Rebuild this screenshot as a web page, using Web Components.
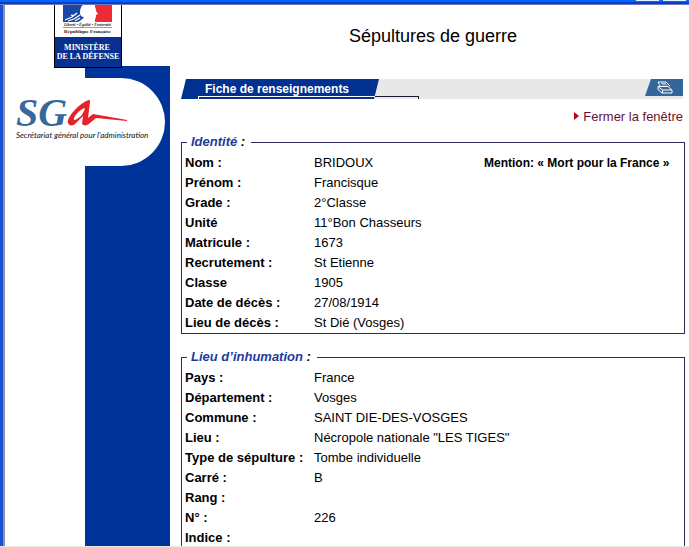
<!DOCTYPE html>
<html lang="fr">
<head>
<meta charset="utf-8">
<title>Sépultures de guerre</title>
<style>
  body {
    margin: 0;
    background: #fff;
    color: #000;
    font: 13px/20px "Liberation Sans", Arial, sans-serif;
  }
</style>
</head>
<body>
<window-frame>
  <side-bar slot="side">
    <ministry-logo></ministry-logo>
    <sga-logo slot="badge"></sga-logo>
  </side-bar>
  <page-title>Sépultures de guerre</page-title>
  <tab-bar>Fiche de renseignements</tab-bar>
  <close-link>Fermer la fenêtre</close-link>
  <record-card id="identite" heading="Identité"></record-card>
  <record-card id="inhumation" heading="Lieu d’inhumation"></record-card>
</window-frame>

<script>
class BaseElement extends HTMLElement {
  constructor() {
    super();
    this.attachShadow({ mode: "open" });
  }

  connectedCallback() {
    this.shadowRoot.innerHTML = this.render();
  }
}

class WindowFrame extends BaseElement {
  render() {
    return `
      <style>
        :host {
          display: grid;
          grid-template-rows: 5px 1fr;
          height: 100vh;
          box-sizing: border-box;
          border-bottom: 1px solid #ece9e0;
          overflow: hidden;
        }
        .top {
          display: flex;
          justify-content: flex-end;
          gap: 4px;
          padding-right: 3px;
          box-sizing: border-box;
          background: linear-gradient(#0566fb 2px, #0040d0 2px 4px, #7478b4 4px);
        }
        .top i {
          width: 23px;
          height: 1px;
          background: #e4f4ff;
        }
        .body {
          display: grid;
          grid-template-columns: 165px 1fr;
          min-height: 0;
          border-left: 3px solid #1c4fd4;
          box-shadow: inset 2px 0 #8c90b0;
          padding-left: 2px;
        }
        main {
          padding: 0 4px 0 11px;
          min-width: 0;
        }
      </style>
      <div class="top"><i></i><i></i></div>
      <div class="body">
        <slot name="side"></slot>
        <main><slot></slot></main>
      </div>
    `;
  }
}

class SideBar extends BaseElement {
  render() {
    return `
      <style>
        :host {
          display: flex;
          flex-direction: column;
        }
        .logo {
          z-index: 1;
          padding-left: 49px;
          height: 61px;
        }
        .band {
          flex: 1;
          padding-top: 12px;
          background: linear-gradient(90deg, #fff 80px, #003399 80px);
        }
      </style>
      <div class="logo"><slot></slot></div>
      <div class="band"><slot name="badge"></slot></div>
    `;
  }
}

class MinistryLogo extends BaseElement {
  render() {
    return `
      <style>
        :host {
          display: block;
          width: 68px;
        }
        svg {
          display: block;
        }
      </style>
      <svg width="68" height="63" viewBox="0 0 68 63" role="img" aria-label="Ministère de la Défense">
        <rect width="68" height="63" fill="#000"/>
        <rect x="1" width="66" height="33" fill="#fff"/>
        <rect x="1" y="32" width="66" height="30" fill="#08308f"/>
        <rect x="9" width="22" height="17" fill="#1a46a4"/>
        <rect x="41" width="17" height="17" fill="#ee2a36"/>
        <path d="M29 0h9c3 1 4 3 4 6l2 3-2 1c0 4-1 5-4 5l1 2H24c3-2 5-3 6-5-3 0-4-2-4-4 0-4 1-7 3-8z" fill="#fff"/>
        <path d="M11 15l7-3 5-4M14 16l6-2 6-4M21 16l5-3M17 10c2 1 4 0 5-1" fill="none" stroke="#fff" stroke-width="1.2"/>
        <text x="33.5" y="21" text-anchor="middle" font-family="Liberation Serif, serif" font-size="4" font-weight="bold" font-style="italic" fill="#222">Liberté • Égalité • Fraternité</text>
        <path d="M9 22.500h49" stroke="#555" stroke-width=".6"/>
        <text x="33.500" y="28" text-anchor="middle" font-family="Liberation Serif, serif" font-size="5" font-weight="bold" fill="#111">République Française</text>
        <g font-family="Liberation Serif, serif" font-size="8" font-weight="bold" fill="#fff" text-anchor="middle">
          <text x="33" y="45">MINISTÈRE</text>
          <text x="34" y="54">DE LA DÉFENSE</text>
        </g>
      </svg>
    `;
  }
}

class SgaLogo extends BaseElement {
  render() {
    return `
      <style>
        :host {
          display: block;
          width: 160px;
          border-radius: 0 44px 44px 0;
          background: #fff;
        }
        svg {
          display: block;
        }
      </style>
      <svg width="160" height="88" viewBox="0 0 160 88" role="img" aria-label="SGA">
        <text x="11" y="48" font-family="Liberation Serif, serif" font-size="40" font-weight="bold" font-style="italic" fill="#38679c">SG</text>
        <!-- brush-stroke "a" with its long tail -->
        <path fill-rule="evenodd" d="M84 22c-7 2-18 12-21 20-1 5 3 7 7 4l8-8-1 8c2 2 5 2 8-1l6-5 31 3v-1l-34-6-5 4 2-16c0-2 0-2-1-2zM80 30c-1 5-5 10-10 12-2 0-1-2 0-4 2-3 6-7 10-8z" fill="#e8202a"/>
        <text x="11" y="60" font-family="Lato, sans-serif" font-size="8" font-style="italic" fill="#111">Secrétariat général pour l'administration</text>
      </svg>
    `;
  }
}

class PageTitle extends BaseElement {
  render() {
    return `
      <style>
        :host {
          display: block;
          padding: 20px 0 32px;
        }
        h1 {
          margin: 0;
          font-size: 18px;
          font-weight: normal;
          line-height: 22px;
          text-align: center;
        }
      </style>
      <h1><slot></slot></h1>
    `;
  }
}

class TabBar extends BaseElement {
  render() {
    return `
      <style>
        :host {
          display: flex;
          justify-content: space-between;
          align-items: flex-start;
          position: relative;
          height: 20px;
          margin-right: 2px;
          background: linear-gradient(90deg, #fff 20px, #e8e8e8 20px);
        }
        h2 {
          box-sizing: border-box;
          width: 198px;
          height: 20px;
          margin: 0;
          padding-left: 24px;
          background: #003090;
          clip-path: polygon(5px 0, 100% 0, calc(100% - 5px) 100%, 0 100%);
          color: #fff;
          font-size: 12px;
          line-height: 21px;
        }
        .rule {
          position: absolute;
          left: 17px;
          top: 17px;
          box-sizing: border-box;
          width: 221px;
          height: 3px;
          border: 1px solid #1a1a38;
          border-bottom: 0;
          border-image: linear-gradient(90deg, #fff 177px, #1a1a38 177px) 1;
          border-image-width: 1px 1px 0 1px;
        }
        button {
          width: 38px;
          height: 17px;
          padding: 0;
          border: 0;
          background: #33679b;
          clip-path: polygon(6px 0, 100% 0, 100% 100%, 0 100%);
        }
        svg {
          display: block;
        }
      </style>
      <h2><slot></slot></h2>
      <span class="rule"></span>
      <button type="button" aria-label="Imprimer">
        <svg width="38" height="17" viewBox="0 0 38 17" fill="none" stroke="#fff">
          <path d="M15 7l-2-4h8l4 4M13 7.500h10l4 3.500v3H17l-4-3.500zM13.500 8l4 3h9M17.500 11v3"/>
          <path d="M16 4.500h5M17 6h5" stroke="#d9b8c4"/>
        </svg>
      </button>
    `;
  }
}

class CloseLink extends BaseElement {
  render() {
    return `
      <style>
        :host {
          display: flex;
          justify-content: flex-end;
          padding: 8px 2px 5px 0;
        }
        a {
          display: flex;
          gap: 4px;
          color: #6b1230;
          text-decoration: none;
        }
        svg {
          margin-top: 5px;
        }
      </style>
      <a href="#">
        <svg width="5" height="8" viewBox="0 0 5 8" aria-hidden="true"><path d="M0 0l5 4-5 4z" fill="#c00018"/></svg>
        <slot></slot>
      </a>
    `;
  }
}

// rows: [label, value, optional note]
const records = {
  identite: [
    ["Nom :", "BRIDOUX", "Mention: « Mort pour la France »"],
    ["Prénom :", "Francisque"],
    ["Grade :", "2°Classe"],
    ["Unité", "11°Bon Chasseurs"],
    ["Matricule :", "1673"],
    ["Recrutement :", "St Etienne"],
    ["Classe", "1905"],
    ["Date de décès :", "27/08/1914"],
    ["Lieu de décès :", "St Dié (Vosges)"],
  ],
  inhumation: [
    ["Pays :", "France"],
    ["Département :", "Vosges"],
    ["Commune :", "SAINT DIE-DES-VOSGES"],
    ["Lieu :", "Nécropole nationale \"LES TIGES\""],
    ["Type de sépulture :", "Tombe individuelle"],
    ["Carré :", "B"],
    ["Rang :", ""],
    ["N° :", "226"],
    ["Indice :", ""],
  ],
};

class RecordCard extends BaseElement {
  render() {
    const rows = records[this.id].map(([label, value, note]) => `
      <tr>
        <th scope="row">${label}</th>
        ${note ? `<td>${value}</td><td class="note">${note}</td>` : `<td colspan="2">${value}</td>`}
      </tr>`).join("");

    return `
      <style>
        :host {
          display: block;
          margin-bottom: 13px;
        }
        fieldset {
          margin: 0;
          padding: 1px 0 0 3px;
          border: 1px solid #302c60;
          min-width: 0;
        }
        legend {
          margin-left: 2px;
          padding: 0 6px 0 4px;
          font-style: italic;
          font-weight: bold;
        }
        legend b {
          color: #1c3c9c;
        }
        table {
          width: 100%;
          table-layout: fixed;
          border-collapse: collapse;
        }
        .label {
          width: 129px;
        }
        .value {
          width: 170px;
        }
        th, td {
          height: 20px;
          padding: 0;
          text-align: left;
          white-space: nowrap;
        }
        .note {
          font-size: 12px;
          font-weight: bold;
        }
      </style>
      <fieldset>
        <legend><b>${this.getAttribute("heading")}</b> :</legend>
        <table>
          <colgroup><col class="label"><col class="value"><col></colgroup>
          <tbody>${rows}</tbody>
        </table>
      </fieldset>
    `;
  }
}

customElements.define("window-frame", WindowFrame);
customElements.define("side-bar", SideBar);
customElements.define("ministry-logo", MinistryLogo);
customElements.define("sga-logo", SgaLogo);
customElements.define("page-title", PageTitle);
customElements.define("tab-bar", TabBar);
customElements.define("close-link", CloseLink);
customElements.define("record-card", RecordCard);
</script>
</body>
</html>
